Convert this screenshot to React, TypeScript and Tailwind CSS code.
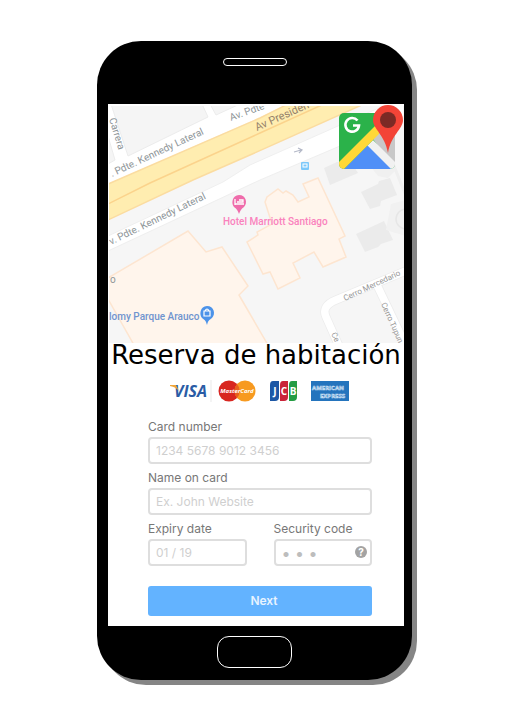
import React from "react";

function GoogleMapsLogo() {
  return (
    <svg className="h-16 w-16" viewBox="0 0 64 64" role="img" aria-label="Google Maps">
      <defs>
        <clipPath id="logo-tile">
          <rect x="0" y="8" width="56" height="56" rx="5" />
        </clipPath>
      </defs>
      <g clipPath="url(#logo-tile)">
        <rect x="0" y="7" width="56" height="57" fill="#2bb24a" />
        <path d="M34 34 L56 12 V64 Z" fill="#c8c8c8" />
        <path d="M28 41 L34 35 L56 57 V64 H50 Z" fill="#f1f1f1" />
        <path d="M5 64 L28.500 40.500 L52 64 Z" fill="#4f8ff7" />
        <path d="M0 57 L40 17 L40 29 L5 64 H0 Z" fill="#ffd837" />
      </g>
      <path
        d="M18.500 15.500 A6.800 6.800 0 1 0 20 20.500 H14"
        fill="none"
        stroke="#fff"
        strokeWidth="2.600"
      />
      <path
        d="M49 0 A15 15 0 0 0 34 15 C34 24 46 30 49 48 C52 30 64 24 64 15 A15 15 0 0 0 49 0 Z"
        fill="#f34437"
      />
      <circle cx="49" cy="15" r="8" fill="#7b2a25" />
    </svg>
  );
}

function HotelMap() {
  return (
    <svg
      className="block w-full"
      viewBox="0 0 296 239"
      role="img"
      aria-label="Mapa del hotel"
      fontFamily="Roboto, sans-serif"
    >
      <defs>
        <clipPath id="map-area">
          <rect x="1" y="2" width="295" height="237" />
        </clipPath>
      </defs>
      <rect width="296" height="239" fill="#fff" />
      <g clipPath="url(#map-area)">
        <rect width="296" height="239" fill="#f6f6f6" />
        <path d="M0 0 H182 L0 80 Z" fill="#fff" />
        <g fill="#f5f5f5" stroke="#ececec" strokeWidth="1">
          <path d="M3 0 H94 L100 13 L20 52 Z" />
          <path d="M0 32 L7 56 L0 60 Z" />
          <path d="M102 0 L108 11 L132 0 Z" />
        </g>

        <path
          d="M0 80 L152 14 L180 0 H256 L142 51 L85 76 L0 116 Z"
          fill="#ffedb0"
          stroke="#fbdca0"
          strokeWidth="1.500"
        />
        <path d="M0 100 L42 79 L152 29 L216 0" fill="none" stroke="#fbd38c" strokeWidth="1.500" />

        <path
          d="M0 132 L115 78 L142 61 L230 22 L280 0 H296 V14 L232 42 L152 76 L0 147 Z"
          fill="#fff"
          stroke="#efefef"
          strokeWidth="1"
        />
        <path d="M258 32 L286 62 L298 92" fill="none" stroke="#efefef" strokeWidth="3" />

        <g fill="#fff5ec" stroke="#fde5d0" strokeWidth="1.500">
          <path d="M0 174 L80 127 L98 148 L114 143 L140 182 L131 191 L142 210 L160 241 H26 L0 195 Z" />
          <path d="M157 98 L159 93 L170 85 L175 89 L178 87 L185 91 L190 98 L201 93 L195 80 L210 74 L237 132 L231 135 L238 153 L215 163 L206 148 L185 159 L192 174 L170 185 L162 168 L155 170 L139 138 L150 131 L149 128 L164 120 Z" />
        </g>

        <g fill="#ebebeb">
          <path d="M216 64 L229 58 L243 58 L250 69 L222 81 Z" />
          <path d="M253 88 L270 80 L271 77 L282 74 L289 91 L273 97 L272 102 L262 105 Z" />
          <path d="M248 130 L276 117 L285 136 L273 140 L270 143 L257 148 Z" />
          <path d="M262 62 L279 55 L288 66 L280 74 L270 72 Z" fill="#f0f0f0" />
        </g>
        <path d="M283 100 L298 96 V132 L278 126 Z" fill="#f1f1f1" />
        <circle cx="298" cy="115" r="10" fill="none" stroke="#e6e6e6" strokeWidth="1.500" />

        <g fill="none" stroke="#ececec" strokeWidth="9">
          <path d="M300 166 L228 196 Q213 202 218 213 L231 242" />
          <path d="M269 181 L298 242" />
        </g>
        <g fill="none" stroke="#fff" strokeWidth="7.500">
          <path d="M300 166 L228 196 Q213 202 218 213 L231 242" />
          <path d="M269 181 L298 242" />
        </g>

        <g fill="#8e9598" fontSize="10">
          <text transform="translate(4 73) rotate(-25)">. Pdte. Kennedy Lateral</text>
          <text transform="translate(3 141) rotate(-26)">v. Pdte. Kennedy Lateral</text>
          <text transform="translate(123 17) rotate(-20)">Av. Pdte</text>
          <text transform="translate(1 15) rotate(73)">Carrera</text>
          <text x="2" y="179">o</text>
        </g>
        <text transform="translate(149 27) rotate(-24)" fill="#95826b" fontSize="11">
          Av Presiden
        </text>
        <g fill="#979797" fontSize="8">
          <text transform="translate(237 197) rotate(-25)">Cerro Mercedario</text>
          <text transform="translate(273 200) rotate(66)">Cerro Tupun</text>
          <text transform="translate(223 230) rotate(63)">Ce</text>
        </g>

        <path d="M186 48 L193 46 M190 44 L194 46 L191 49" fill="none" stroke="#b4b9c8" strokeWidth="1.200" />
        <rect x="193" y="58" width="8" height="8" rx="1" fill="#7cc8fa" />
        <rect x="195" y="60" width="4" height="3" fill="none" stroke="#fff" />

        <path d="M131 91 C124 91 123 100 126 103 C129 105 130 107 131 110 C132 107 133 105 136 103 C140 99 138 91 131 91 Z" fill="#ef6cab" />
        <path d="M127 95 V101 M127 100 H136 M129 98 H135 V96 H131" fill="none" stroke="#fff" strokeWidth="1.300" />
        <text x="115" y="121" fill="#fa82bd" fontSize="10" fontWeight="500">
          Hotel Marriott Santiago
        </text>

        <path d="M99 202 C92 202 91 211 94 214 C97 216 98 217 99 221 C100 217 101 216 104 214 C108 210 106 202 99 202 Z" fill="#4d93e9" />
        <path d="M96 207 H102 V212 H96 Z M97 207 Q99 203 101 207" fill="none" stroke="#fff" strokeWidth="1.200" />
        <text x="1" y="216" fill="#7094cf" fontSize="10" fontWeight="500">
          lomy Parque Arauco
        </text>
      </g>
    </svg>
  );
}

function CardBrands() {
  return (
    <svg
      className="mx-auto block h-6 w-[180px]"
      viewBox="0 0 180 24"
      role="img"
      aria-label="Visa, MasterCard, JCB, American Express"
      fontFamily="Open Sans, sans-serif"
      fontWeight="700"
    >
      <text x="4" y="18" fontSize="16" fontStyle="italic" fontWeight="700" fill="#2a5ca5">
        VISA
      </text>
      <path d="M0 6 H6 L9 12 Q6 8 0 7 Z" fill="#f0a63a" />
      <path d="M41 1 V23" stroke="#e9e9e9" />

      <circle cx="59" cy="12" r="10.500" fill="#d8261f" />
      <circle cx="75" cy="12" r="10.500" fill="#f79a20" />
      <path d="M67 5 A10.500 10.500 0 0 1 67 19 A10.500 10.500 0 0 1 67 5 Z" fill="#e8601e" />
      <text x="67" y="14" textAnchor="middle" fontSize="6" fontStyle="italic" fill="#fff">
        MasterCard
      </text>

      <path d="M103 2 H109 V18 Q109 22 105 22 H100 V6 Q100 2 103 2 Z" fill="#1c57a5" />
      <path d="M113 2 H118 V18 Q118 22 114 22 H110 V6 Q110 2 113 2 Z" fill="#ca2339" />
      <path d="M122 2 H127 V18 Q127 22 123 22 H119 V6 Q119 2 122 2 Z" fill="#249c43" />
      <g fill="#fff" fontSize="10" textAnchor="middle">
        <text x="105" y="16">J</text>
        <text x="114" y="16">C</text>
        <text x="123" y="16">B</text>
      </g>

      <rect x="141" y="2" width="38" height="20" fill="#2474bd" />
      <g fill="#2474bd" stroke="#c5dcf1" strokeWidth="0.600" fontSize="6">
        <text x="142" y="11">AMERICAN</text>
        <text x="150" y="19">EXPRESS</text>
      </g>
    </svg>
  );
}

interface FieldProps {
  id: string;
  label: string;
  placeholder: string;
  hint?: boolean;
}

function Field({ id, label, placeholder, hint }: FieldProps) {
  return (
    <div className="min-w-0">
      <label htmlFor={id} className="block h-[18px] text-[12px] leading-4 whitespace-nowrap text-[#777]">
        {label}
      </label>
      <div className="relative">
        <input
          id={id}
          type="text"
          placeholder={placeholder}
          className={
            hint
              ? "block h-[27px] w-full rounded border-2 border-[#dedede] bg-white px-1.5 text-[16px] text-[#777] outline-none placeholder:text-[#bdbdbd]"
              : "block h-[27px] w-full rounded border-2 border-[#dedede] bg-white px-1.5 text-[12px] text-[#777] outline-none placeholder:text-[#cfcfcf]"
          }
        />
        {hint && (
          <button
            type="button"
            aria-label="Help"
            className="absolute top-[7px] right-[5px] flex size-3 items-center justify-center rounded-full bg-[#a3a3a3] text-[10px] leading-3 font-bold text-white"
          >
            ?
          </button>
        )}
      </div>
    </div>
  );
}

export default function App() {
  return (
    <main className="flex min-h-screen items-start justify-center bg-white px-4 py-[41px]">
      <div className="w-full max-w-[315px] rounded-[44px] bg-black pr-2 pl-[11px] shadow-[5px_5px_0_#858585]">
        <div className="flex h-[63px] justify-center pt-[17px] pr-[3px]">
          <div className="h-2 w-16 rounded-full border border-white" />
        </div>

        <div className="bg-white">
          <div className="relative">
            <HotelMap />
            <div className="absolute top-px right-px">
              <GoogleMapsLogo />
            </div>
          </div>

          <h1 className="text-center font-['DejaVu_Sans',sans-serif] text-[26px] leading-6 whitespace-nowrap text-black">
            Reserva de habitación
          </h1>

          <form
            className="pt-3 pr-8 pb-2.5 pl-10 font-[Inter,sans-serif]"
            onSubmit={(event) => event.preventDefault()}
          >
            <CardBrands />
            <div className="mt-4 grid gap-1.5">
              <Field id="card-number" label="Card number" placeholder="1234 5678 9012 3456" />
              <Field id="card-name" label="Name on card" placeholder="Ex. John Website" />
              <div className="grid grid-cols-2 gap-[27px]">
                <Field id="expiry" label="Expiry date" placeholder="01 / 19" />
                <Field id="security" label="Security code" placeholder="• • •" hint />
              </div>
            </div>
            <button
              type="submit"
              className="mt-5 block h-[30px] w-full rounded-[3px] bg-[#63b3ff] pl-2 text-[12px] font-semibold text-[#e8f4ff]"
            >
              Next
            </button>
          </form>
        </div>

        <div className="flex h-[54px] justify-center pt-2.5 pr-[3px]">
          <button
            type="button"
            aria-label="Home"
            className="h-8 w-[75px] rounded-xl border border-white bg-black"
          />
        </div>
      </div>
    </main>
  );
}
